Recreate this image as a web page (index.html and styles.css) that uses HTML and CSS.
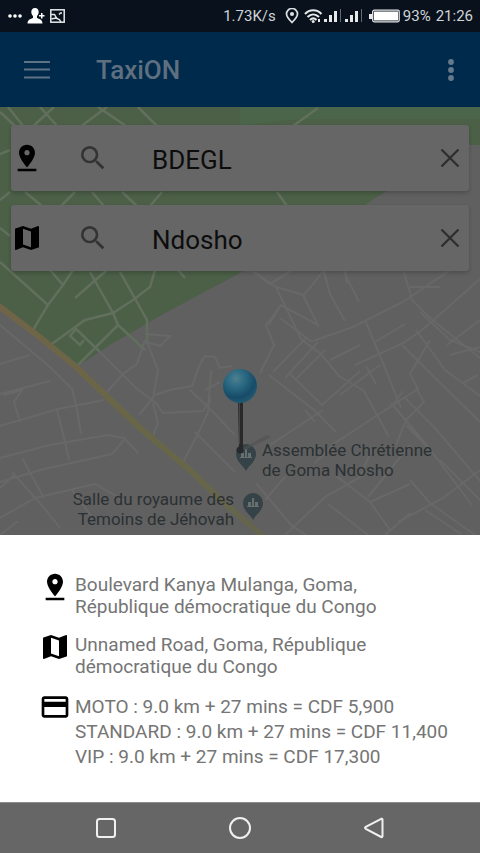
FILE: index.html
```html
<!DOCTYPE html>
<html lang="en">
<head>
  <meta charset="UTF-8" />
  <meta name="viewport" content="width=device-width, initial-scale=1.0"/>
  <title>TaxiON</title>
  <link rel="stylesheet" href="styles.css">
</head>
<body>

<!-- System status bar -->
<div class="status-bar">
  <div class="status-left">
    <svg width="14" height="20" viewBox="0 0 14 20" fill="#fff"><circle cx="2" cy="10" r="1.8"/><circle cx="7" cy="10" r="1.8"/><circle cx="12" cy="10" r="1.8"/></svg>
    <svg width="18" height="16" viewBox="0 0 18 16" fill="#fff"><path d="M8 0c-2.600 0-3.700 1.700-3.700 4 0 1.800.8 3 1.700 4v2C4 10.800.5 11.500.5 15.500h15c0-4-3.500-4.700-5.500-5.500V8c.9-1 1.700-2.200 1.700-4 0-2.300-1.100-4-3.700-4z"/><path d="M14 5h1.500v2h2v1.500h-2v2H14v-2h-2V7h2z"/></svg>
    <svg width="15" height="14" viewBox="0 0 15 14" fill="none" stroke="#e6e8ea" stroke-width="1.500"><rect x=".8" y=".8" width="13.400" height="12.400"/><path d="M1 5.500h3.500l2 3.500M1.500 10c4-1.500 8-1 9.500 3M9 5.500l1.500-1.500h1.500"/></svg>
  </div>
  <div class="status-right">
    <span class="net-speed">1.73K/s</span>
    <svg width="14" height="16" viewBox="0 0 14 16" fill="none" stroke="#dde0e3" stroke-width="1.700"><path d="M7 14.500C4 11.500 1.500 9 1.500 6a5.500 5.500 0 0 1 11 0c0 3-2.500 5.500-5.500 8.500z"/><circle cx="7" cy="6" r="1.200" fill="#dde0e3"/></svg>
    <svg class="wifi" width="58" height="16" viewBox="0 0 58 16"><g fill="none" stroke="#e6e8ea" stroke-width="2"><path d="M1 6c4.500-5 12-5 16.500 0M3.500 9c3.500-3.500 8-3.500 11.500 0M6 12c2-2 4.500-2 6.500 0"/></g><circle cx="9.200" cy="13.500" r="1.500" fill="#e6e8ea"/><path d="M14 11h2v3h-2zM20 11h3v3h-3zM25 7h3v7h-3zM30 3h3v11h-3zM41 11h3v3h-3zM46 7h3v7h-3zM51 3h3v11h-3z" fill="#e6e8ea"/><path d="M36 1h1v13h-1zM57 1h1v13h-1z" fill="#626970"/></svg>
    <svg class="battery" width="31" height="14" viewBox="0 0 31 14"><path d="M0 5h3v5H0z" fill="#e6e8ea"/><rect x="3.700" y="1.200" width="26.500" height="11.600" rx="1.500" fill="none" stroke="#e6e8ea" stroke-width="1.300"/><path d="M5 2.500h24v9H5z" fill="#fff"/></svg>
    <span>93%</span>
    <span class="clock">21:26</span>
  </div>
</div>

<!-- App bar -->
<header class="app-bar">
  <button class="icon-btn" aria-label="Menu">
    <svg width="26" height="20" viewBox="0 0 26 20"><path d="M0 2h26M0 9.500h26M0 17.500h26" stroke="#5e7283" stroke-width="2.200"/></svg>
  </button>
  <h1>TaxiON</h1>
  <button class="icon-btn" aria-label="More options">
    <svg width="8" height="24" viewBox="0 0 8 24" fill="#65798b"><circle cx="4" cy="4" r="2.900"/><circle cx="4" cy="12" r="2.900"/><circle cx="4" cy="20" r="2.900"/></svg>
  </button>
</header>

<main class="map">
  <svg class="map-canvas" viewBox="0 107 480 428" preserveAspectRatio="xMidYMid slice" aria-hidden="true">
    <defs>
      <radialGradient id="ball" cx="38%" cy="28%" r="75%">
        <stop offset="0" stop-color="#4d7f90"/>
        <stop offset=".35" stop-color="#2b6a82"/>
        <stop offset=".75" stop-color="#174c68"/>
        <stop offset="1" stop-color="#245a74"/>
      </radialGradient>
      <linearGradient id="highway" x1="0" y1="0" x2="1" y2="1">
        <stop offset="0" stop-color="#716447"/>
        <stop offset=".45" stop-color="#696647"/>
        <stop offset=".75" stop-color="#67664a"/>
        <stop offset="1" stop-color="#64644f"/>
      </linearGradient>
      <g id="poi">
        <path d="M0 16C-2 11-10 7-10-1a10 10 0 0 1 20 0C10 7 2 11 0 16z" fill="#354247"/>
        <path d="M-1-6h2v8h-2zM-5-2h3v4h-3zM2-2h3v4H2zM-6 2H6v1H-6z" fill="#66706f"/>
      </g>
    </defs>
    <rect y="107" width="480" height="428" fill="#606060"/>
    <path d="M0 107h480v38h-10l-90 50-15 10-125 68-75 40-55 32-34 22-76-60z" fill="#4b6047"/>
    <path d="M240 107h240v12H300l-60 7z" fill="#4a6549"/>

    <!-- streets inside the park -->
    <g fill="none" stroke="#616f5c" stroke-width="2.500">
      <path d="M0 112l15 14M8 107l16 20M54 107l-24 22M40 107l18 20M107 107l-27 20M98 107l28 19M138 107l20 20M318 108l-25 18"/>
      <path d="M0 154l10-4M0 200l10-8M0 228l10 8M0 262l48 43-15 25M50 270l13 15-15 20M63 285l10-15"/>
      <path d="M107 270l-32 28M90 272l23 41 5 12 27 25M120 272l27 48v22M155 270l-5 17-17 13-20 13-28 7-36 26"/>
      <path d="M75 328l24 23M118 325l-42 42M76 329l-6 7 10 9 4-5M178 270l7 8"/>
      <path d="M25 192l17 14M75 192l-14 14M92 192l12 14M122 192l15 14M150 206l12-14M277 192l10 14"/>
    </g>

    <!-- minor streets -->
    <g fill="none" stroke="#686868" stroke-width="2">
      <path d="M0 325l50 42 22 22 5 20 4 25M0 364l30-9M0 394l50-13M0 426l58-17 46-9M57 410l7 28 5 22M0 458l50-13 58-10 16 3 14 15M0 482l44-13 68-15 12-14M12 472l32 36 16 20M0 488l14-13M0 518l35-20 60-14M22 458l22 40M0 535l18-14M72 490l20 27M95 484l30 17M4 395l18-5-8 12 6 20"/>
      <path d="M99 351l37 37 20 15 7 10 40-2 8-12M145 340l-8 24-14 10-16 18M147 342l11 28-5 28-14 17M153 403l5 20-6 15M155 395l15-5 22-4 8-22 5-8 10 1 5 11 12-2"/>
      <path d="M190 390l21 20 24 25M211 370l-3 42-10 22-15 28M195 432l40 40M145 342l15 4 10-10-25-2M205 390l15-8"/>
      <path d="M253 272l23 15 25 52 20 15 18 22 25 15 25 46M276 287l28 8 20-25M324 272l6 22 15 27M344 272l15 30M303 295l15 30-37-20-12 20M281 305l-15 20 8 20-14 28M280 318l32 24M306 338l-33 34M318 342l-33 36M325 350l-30 30M313 341l40-14 50-25 65-44M330 360l30-15M355 365l48-22 18-12 25-22 34-30M365 320l18 43 18 45M375 342l30-18M404 272l8 28 18 18 50 40"/>
      <path d="M420 312l30 28 30 12M416 330l29 40 35 26M430 340l-20 34 8 15-25 16-58 38-20 20M402 345l25 25 53 52M380 365l-40 30M366 366l10 18M393 405l10-14M269 375l45 35 22 22M290 374l32 31 38-34M405 398l30 30 45 53M391 403l34 40 47 62M416 388l8 14-18 18-10 25M315 422l-10-12M270 445l53-35M406 425l24 25M447 345l33-25M450 355l30-8M478 375l-15 8M410 287h30"/>
      <path d="M256 483l35 42 15 10M285 535l40-38 35-20 12-28M335 475l35 27 20 28M328 504l40 31M370 502l40-18M368 497l42-52M410 480l20 23 45 32M398 522l45-24 37-28M425 510l36 24M440 460l40 40M385 535l25-22M265 500l20-23"/>
      <path d="M470 145l-30 22M255 272l15 12 22-14M323 270l4 12M345 270l2 14"/>
    </g>

    <path d="M-4 304l40 30 39 32 65 62 52 44 31 30 42 36" fill="none" stroke="url(#highway)" stroke-width="6"/>

    <use href="#poi" x="246" y="455"/>
    <use href="#poi" x="253" y="504"/>

    <!-- pick-up pin -->
    <path d="M241 449l26-14 4 2-26 13z" fill="#535151" opacity=".6"/>
    <path d="M238 400h5v50h-4z" fill="#292929"/>
    <path d="M239 402h1v42h-1z" fill="#454849"/>
    <circle cx="240" cy="450" r="3.500" fill="#242a2d"/>
    <circle cx="240" cy="386" r="17" fill="url(#ball)"/>
  </svg>
  <p class="poi-label poi-church">Assemblée Chrétienne<br>de Goma Ndosho</p>
  <p class="poi-label poi-hall">Salle du royaume des<br>Temoins de Jéhovah</p>

  <form class="search">
    <div class="search-card">
      <svg class="place-icon" viewBox="0 0 24 24"><path d="M18 8c0-3.310-2.690-6-6-6S6 4.690 6 8c0 4.500 6 11 6 11s6-6.500 6-11zm-8 0c0-1.100.9-2 2-2s2 .9 2 2-.89 2-2 2c-1.100 0-2-.9-2-2zM5 20v2h14v-2H5z"/></svg>
      <svg class="search-icon" viewBox="0 0 24 24"><path d="M15.500 14h-.79l-.28-.27A6.471 6.471 0 0 0 16 9.500 6.500 6.500 0 1 0 9.500 16c1.610 0 3.090-.59 4.230-1.570l.27.28v.79l5 4.990L20.490 19l-4.990-5zm-6 0C7.010 14 5 11.990 5 9.500S7.010 5 9.500 5 14 7.010 14 9.500 11.990 14 9.500 14z"/></svg>
      <input type="text" aria-label="Pick-up place" value="BDEGL">
      <button type="button" class="icon-btn" aria-label="Clear pick-up place"><svg width="20" height="20" viewBox="0 0 20 20"><path d="M1.500 1.500l17 17M18.500 1.500l-17 17" stroke="#2d2d2d" stroke-width="2.200"/></svg></button>
    </div>
    <div class="search-card">
      <svg class="place-icon" viewBox="0 0 24 24"><path d="M20.500 3l-.16.030L15 5.100 9 3 3.360 4.900c-.21.070-.36.250-.36.480V20.500c0 .28.220.5.500.5l.16-.030L9 18.900l6 2.100 5.640-1.900c.21-.07.36-.25.36-.48V3.500c0-.28-.22-.5-.5-.5zM15 19l-6-2.110V5l6 2.110V19z"/></svg>
      <svg class="search-icon" viewBox="0 0 24 24"><path d="M15.500 14h-.79l-.28-.27A6.471 6.471 0 0 0 16 9.500 6.500 6.500 0 1 0 9.500 16c1.610 0 3.090-.59 4.230-1.570l.27.28v.79l5 4.990L20.490 19l-4.990-5zm-6 0C7.010 14 5 11.990 5 9.500S7.010 5 9.500 5 14 7.010 14 9.500 11.990 14 9.500 14z"/></svg>
      <input type="text" aria-label="Destination" value="Ndosho">
      <button type="button" class="icon-btn" aria-label="Clear destination"><svg width="20" height="20" viewBox="0 0 20 20"><path d="M1.500 1.500l17 17M18.500 1.500l-17 17" stroke="#2d2d2d" stroke-width="2.200"/></svg></button>
    </div>
  </form>
</main>

<!-- Trip summary sheet -->
<section class="sheet">
  <div class="sheet-row">
    <svg class="sheet-icon" viewBox="0 0 24 24"><path d="M18 8c0-3.310-2.690-6-6-6S6 4.690 6 8c0 4.500 6 11 6 11s6-6.500 6-11zm-8 0c0-1.100.9-2 2-2s2 .9 2 2-.89 2-2 2c-1.100 0-2-.9-2-2zM5 20v2h14v-2H5z"/></svg>
    <p>Boulevard Kanya Mulanga, Goma, République démocratique du Congo</p>
  </div>
  <div class="sheet-row">
    <svg class="sheet-icon" viewBox="0 0 24 24"><path d="M20.500 3l-.16.030L15 5.100 9 3 3.360 4.900c-.21.070-.36.250-.36.480V20.500c0 .28.220.5.500.5l.16-.030L9 18.900l6 2.100 5.640-1.900c.21-.07.36-.25.36-.48V3.500c0-.28-.22-.5-.5-.5zM15 19l-6-2.110V5l6 2.110V19z"/></svg>
    <p>Unnamed Road, Goma, République démocratique du Congo</p>
  </div>
  <div class="sheet-row">
    <svg class="sheet-icon" viewBox="0 0 24 24"><path d="M20 4H4c-1.110 0-1.990.89-1.990 2L2 18c0 1.110.89 2 2 2h16c1.110 0 2-.89 2-2V6c0-1.110-.89-2-2-2zm0 14H4v-6h16v6zm0-10H4V6h16v2z"/></svg>
    <ul class="fares">
      <li>MOTO : 9.0 km + 27 mins = CDF 5,900</li>
      <li>STANDARD : 9.0 km + 27 mins = CDF 11,400</li>
      <li>VIP : 9.0 km + 27 mins = CDF 17,300</li>
    </ul>
  </div>
</section>

<!-- Android navigation keys -->
<nav class="nav-bar">
  <button class="icon-btn" aria-label="Recent apps"><svg width="22" height="22" viewBox="0 0 22 22"><rect x="2" y="2" width="18" height="18" rx="2.500"/></svg></button>
  <button class="icon-btn" aria-label="Home"><svg width="22" height="22" viewBox="0 0 22 22"><circle cx="11" cy="11" r="10"/></svg></button>
  <button class="icon-btn" aria-label="Back"><svg width="22" height="22" viewBox="0 0 22 22"><path d="M18.200 1.800L2.800 9.800q-1.500 1 0 2l15.400 8.200q1.300.5 1.300-1V2.800q0-1.500-1.300-1z"/></svg></button>
</nav>

</body>
</html>
```
FILE: styles.css
```css
* {
  box-sizing: border-box;
}

body {
  margin: 0;
  min-height: 100vh;
  display: flex;
  flex-direction: column;
  font-family: Roboto, sans-serif;
  background: #606060;
}

h1, p, ul {
  margin: 0;
  padding: 0;
}

svg {
  display: block;
  flex: none;
}

.icon-btn {
  display: flex;
  align-items: center;
  justify-content: center;
  padding: 0;
  border: none;
  background: none;
  cursor: pointer;
}

/* status bar */
.status-bar {
  display: flex;
  align-items: center;
  justify-content: space-between;
  height: 32px;
  padding: 0 7px 0 8px;
  background: #09121c;
  color: #d0d4d8;
  font-size: 15px;
}

.status-left,
.status-right {
  display: flex;
  align-items: center;
  gap: 5px;
}

.status-right {
  gap: 3px;
}

.net-speed {
  margin-right: 6px;
}

.wifi {
  margin-left: 2px;
}

.battery {
  margin-left: 4px;
}

.clock {
  margin-left: 2px;
}

/* app bar */
.app-bar {
  display: flex;
  align-items: center;
  height: 75px;
  padding: 0 25px 0 24px;
  background: #002a4b;
}

.app-bar h1 {
  flex: 1;
  margin-left: 46px;
  font-size: 26px;
  font-weight: 500;
  color: #5e7080;
}

/* map */
.map {
  position: relative;
  flex: 1;
  min-height: 400px;
  overflow: hidden;
}

.map-canvas {
  position: absolute;
  inset: 0;
  width: 100%;
  height: 100%;
}

.poi-label {
  position: absolute;
  font-size: 17px;
  line-height: 20px;
  color: #2b3133;
  white-space: nowrap;
}

.poi-church {
  left: calc(50% + 22px);
  top: 333px;
}

.poi-hall {
  right: calc(50% + 6px);
  top: 382px;
  text-align: right;
}

/* search fields */
.search {
  position: relative;
  display: flex;
  flex-direction: column;
  gap: 14px;
  padding: 18px 11px;
}

.search-card {
  display: flex;
  align-items: center;
  height: 66px;
  padding-right: 9px;
  border-radius: 3px;
  background: #666;
  box-shadow: 0 2px 4px rgba(0, 0, 0, 0.2);
}

.search-card input {
  flex: 1;
  min-width: 0;
  margin-left: 43px;
  padding: 4px 0 0;
  border: none;
  outline: none;
  background: none;
  font-family: inherit;
  font-size: 26px;
  color: #0d0d0d;
}

.place-icon {
  width: 32px;
  height: 32px;
}

.search-icon {
  width: 32px;
  height: 32px;
  margin-left: 34px;
  fill: #333;
}

/* bottom sheet */
.sheet {
  display: flex;
  flex-direction: column;
  gap: 16px;
  padding: 39px 32px 33px 39px;
  background: #fff;
  color: #757575;
  font-size: 19px;
  line-height: 22px;
}

.sheet-row {
  display: flex;
  gap: 4px;
}

.sheet-row p {
  max-width: 320px;
}

.sheet-icon {
  width: 32px;
  height: 32px;
  margin-top: -3px;
}

.fares {
  list-style: none;
  line-height: 25px;
}

/* navigation keys */
.nav-bar {
  display: flex;
  align-items: center;
  justify-content: center;
  gap: 22px;
  height: 51px;
  background: #666;
  border-top: 1px solid #8c8c8c;
}

.nav-bar .icon-btn {
  width: 112px;
  height: 48px;
}

.nav-bar svg {
  fill: none;
  stroke: #f0f0f0;
  stroke-width: 2;
}
```
